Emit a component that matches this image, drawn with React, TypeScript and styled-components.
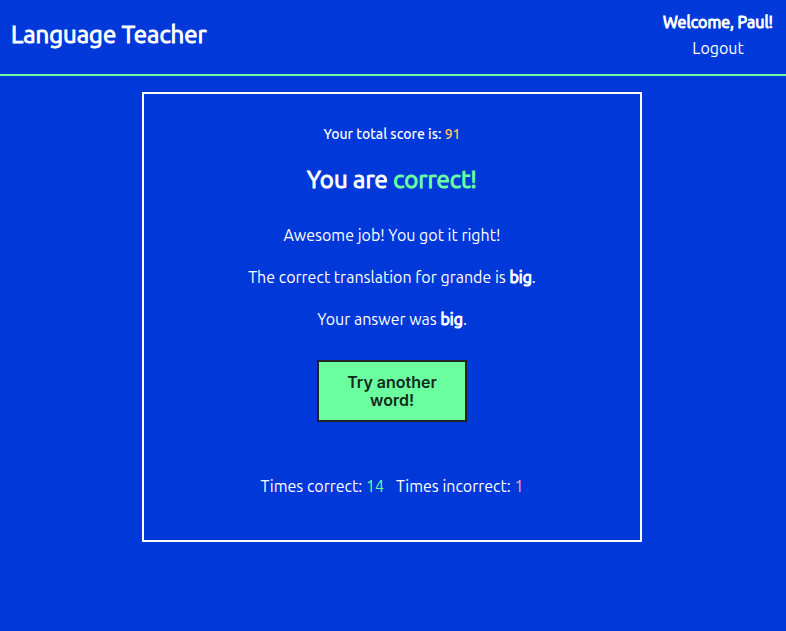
import React from "react";
import styled, { createGlobalStyle, css } from "styled-components";

const GlobalStyle = createGlobalStyle`
  * {
    box-sizing: border-box;
  }

  body {
    margin: 0;
    background: #0038d9;
    color: #ffffff;
    font-family: Ubuntu, "Noto Sans", sans-serif;
    font-size: 16px;
    line-height: 18px;
  }
`;

const emphasis = css`
  font-weight: 400;
  -webkit-text-stroke: 1px currentColor;
`;

const Header = styled.header`
  display: flex;
  justify-content: space-between;
  padding: 13px 13px 17px 11px;
  border-bottom: 2px solid #6cffa0;
`;

const SiteTitle = styled.h1`
  margin: 8px 0 0;
  font-size: 24px;
  line-height: 28px;
  ${emphasis}
`;

const Account = styled.div`
  display: flex;
  flex-direction: column;
  align-items: center;
  gap: 8px;
`;

const Welcome = styled.p`
  margin: 0;
  ${emphasis}
`;

const LogoutLink = styled.a`
  color: inherit;
  text-decoration: none;
`;

const Main = styled.main`
  display: flex;
  justify-content: center;
  padding: 16px 18px 16px 16px;
`;

const ResultCard = styled.section`
  display: flex;
  flex-direction: column;
  align-items: center;
  width: 100%;
  max-width: 500px;
  padding: 32px 24px 45px;
  border: 2px solid #ffffff;
  text-align: center;
`;

const Score = styled.p`
  margin: 0 0 24px;
  font-size: 14px;
  line-height: 16px;
  font-weight: 500;
`;

const Verdict = styled.h2`
  margin: 0 0 32px;
  font-size: 24px;
  line-height: 28px;
  ${emphasis}
`;

const Message = styled.p`
  margin: 0 0 24px;

  strong {
    ${emphasis}
  }
`;

const TryButton = styled.button`
  width: 150px;
  margin: 8px 0 55px;
  padding: 11px 24px;
  border: 2px solid #222222;
  border-radius: 0;
  background: #6cffa0;
  color: #112a1b;
  font-family: Inter, sans-serif;
  font-size: 16px;
  font-weight: 600;
  line-height: 18px;
  cursor: pointer;
`;

const Tally = styled.div`
  display: flex;
  flex-wrap: wrap;
  justify-content: center;
  gap: 12px;
`;

const tones = { good: "#6cffa0", bad: "#ffaa99", score: "#ffc959" };

const Tone = styled.span<{ $tone: keyof typeof tones }>`
  color: ${({ $tone }) => tones[$tone]};
  -webkit-text-stroke-color: ${({ $tone }) => tones[$tone]};
`;

export default function App() {
  return (
    <>
      <GlobalStyle />
      <Header>
        <SiteTitle>Language Teacher</SiteTitle>
        <Account>
          <Welcome>Welcome, Paul!</Welcome>
          <LogoutLink href="#logout">Logout</LogoutLink>
        </Account>
      </Header>
      <Main>
        <ResultCard>
          <Score>
            Your total score is: <Tone $tone="score">91</Tone>
          </Score>
          <Verdict>
            You are <Tone $tone="good">correct!</Tone>
          </Verdict>
          <Message>Awesome job! You got it right!</Message>
          <Message>
            The correct translation for grande is <strong>big</strong>.
          </Message>
          <Message>
            Your answer was <strong>big</strong>.
          </Message>
          <TryButton type="button">Try another word!</TryButton>
          <Tally>
            <span>
              Times correct: <Tone $tone="good">14</Tone>
            </span>
            <span>
              Times incorrect: <Tone $tone="bad">1</Tone>
            </span>
          </Tally>
        </ResultCard>
      </Main>
    </>
  );
}
